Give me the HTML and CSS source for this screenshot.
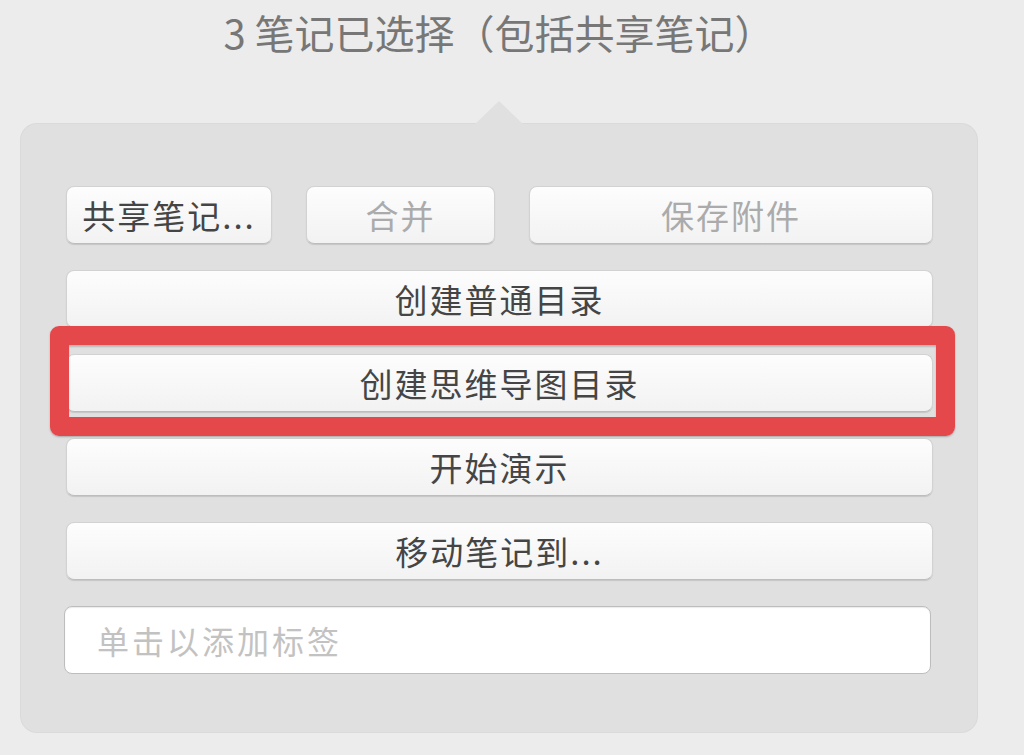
FILE: index.html
```html
<html>
	<head>
	<meta charset="utf-8">
	<title>笔记已选择</title>
	<link rel="stylesheet" href="styles.css">
	</head>
	<body>
<div id="wrap">
	<h1 class="title">3 笔记已选择（包括共享笔记）</h1>

	<div class="panel">
		<div class="row-top">
			<button class="btn">共享笔记...</button>
			<button class="btn" disabled>合并</button>
			<button class="btn" disabled>保存附件</button>
		</div>
		<button class="btn">创建普通目录</button>
		<div class="marked">
			<button class="btn">创建思维导图目录</button>
			<div class="mark"></div>
		</div>
		<button class="btn">开始演示</button>
		<button class="btn">移动笔记到...</button>
		<input class="tags" type="text" placeholder="单击以添加标签">
	</div>
</div>
	</body>
</html>
```

FILE: styles.css
```css
body {
	margin: 0;
	background: #ececec;
	font-family: "Noto Sans CJK SC", "Noto Sans", sans-serif;
}
#wrap {
	width: 956px;
	margin-left: 21px;
}
.title {
	margin: 0;
	padding-top: 9px;
	height: 46px;
	line-height: 46px;
	text-align: center;
	font-size: 40px;
	font-weight: normal;
	letter-spacing: 0;
	color: #777;
}

/* popover */
.panel {
	position: relative;
	margin-top: 69px;
	padding: 62px 44px 58px 45px;
	background: #e0e0e0;
	border-radius: 16px;
	box-shadow: 0 0 0 1px #dadada;
	display: flex;
	flex-direction: column;
	gap: 26px;
}
.panel:before {
	content: "";
	position: absolute;
	top: -23px;
	left: 454px;
	border-left: 24px solid transparent;
	border-right: 24px solid transparent;
	border-bottom: 23px solid #e0e0e0;
}

.row-top {
	display: grid;
	grid-template-columns: 206px 189px 1fr;
	gap: 34px;
}

.btn {
	display: block;
	width: 100%;
	height: 58px;
	padding: 0;
	border: 1px solid #d2d2d2;
	border-bottom-color: #bdbdbd;
	border-radius: 8px;
	background: linear-gradient(#fdfdfd, #f2f2f2);
	box-shadow: 0 1px 1px rgba(0,0,0,0.12);
	font-family: inherit;
	font-size: 33px;
	letter-spacing: 2px;
	color: #454545;
	white-space: nowrap;
}
.btn:disabled {color: #ababab;}

.marked {position: relative;}
.mark {
	position: absolute;
	top: -28px;
	left: -16px;
	right: -22px;
	bottom: -24px;
	border: 19px solid #e4484b;
	border-radius: 9px;
	box-shadow: 0 1px 2px rgba(0,0,0,0.25), inset 0 2px 2px rgba(0,0,0,0.18);
}

.tags {
	display: block;
	width: 100%;
	height: 68px;
	margin-left: -2px;
	padding: 0 0 0 32px;
	border: 1px solid #bdbdbd;
	border-radius: 8px;
	background: #fff;
	box-shadow: inset 0 1px 1px rgba(0,0,0,0.08);
	font-family: inherit;
	font-size: 32px;
	letter-spacing: 3px;
	outline: none;
}
.tags::placeholder {color: #c2c2c2;}
```
